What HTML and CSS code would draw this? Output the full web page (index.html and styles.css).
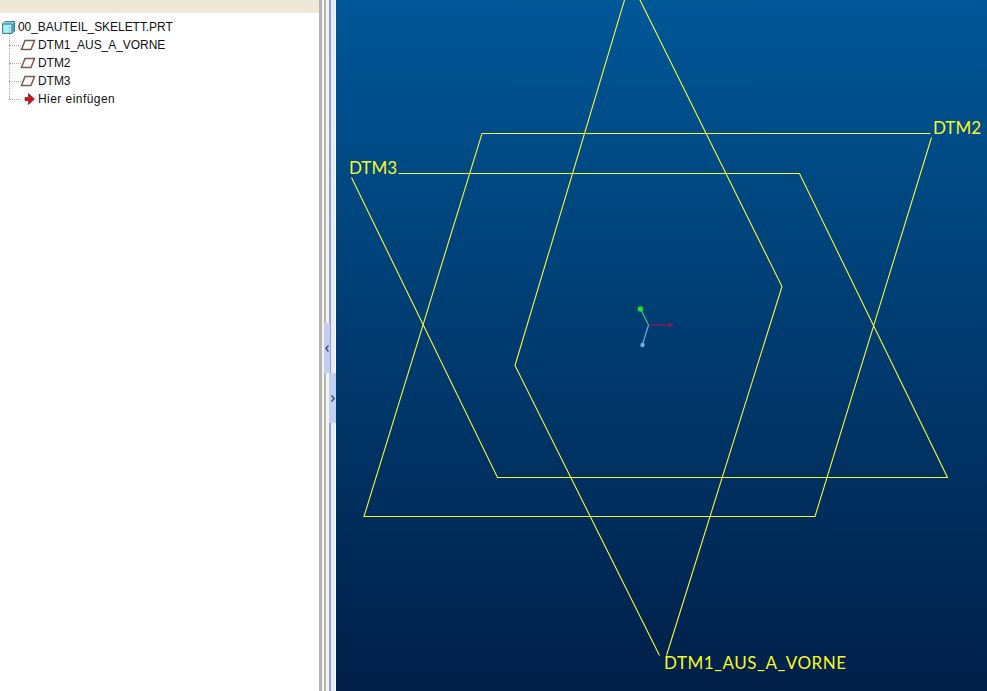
FILE: index.html
```html
<!DOCTYPE html>
<html lang="de">
<head>
<meta charset="utf-8">
<title>00_BAUTEIL_SKELETT.PRT</title>
<link rel="stylesheet" href="styles.css">
</head>
<body>
<div class="app">
  <aside class="panel">
    <div class="panel-top"></div>
    <ul class="tree">
      <li class="row root">
        <svg class="ico" width="13" height="13" viewBox="0 0 13 13"><path d="M.5 3 L3 .5 H12.5 V10 L10 12.5 H.5 Z" fill="#7fdfe8" stroke="#45808f"/><path d="M.5 3 H10 V12.5" fill="none" stroke="#45808f"/><path d="M10.5 3 L12 1.5 V10 L10.5 11.5 Z" fill="#3d9bb0"/><path d="M1.5 4 H9 V11.5 H1.5 Z" fill="#a9f0f6"/></svg>
        <span>00_BAUTEIL_SKELETT.PRT</span>
      </li>
      <li class="row child">
        <i class="dots"></i>
        <svg class="plane" width="16" height="12" viewBox="0 0 16 12"><path d="M5 1.5 H14.5 L11 10.5 H1.5 Z" fill="#fff" stroke="#7a5a48" stroke-width="1.5"/></svg>
        <span>DTM1_AUS_A_VORNE</span>
      </li>
      <li class="row child">
        <i class="dots"></i>
        <svg class="plane" width="16" height="12" viewBox="0 0 16 12"><path d="M5 1.5 H14.5 L11 10.5 H1.5 Z" fill="#fff" stroke="#7a5a48" stroke-width="1.5"/></svg>
        <span>DTM2</span>
      </li>
      <li class="row child">
        <i class="dots"></i>
        <svg class="plane" width="16" height="12" viewBox="0 0 16 12"><path d="M5 1.5 H14.5 L11 10.5 H1.5 Z" fill="#fff" stroke="#7a5a48" stroke-width="1.5"/></svg>
        <span>DTM3</span>
      </li>
      <li class="row child last">
        <i class="dots"></i>
        <svg class="plane" width="16" height="12" viewBox="0 0 16 12"><path d="M5 4.5 H8.5 V.5 L14.5 6 L8.5 11.5 V7.5 H5 Z" fill="#d4101c" stroke="#5a0a10" stroke-width=".6"/></svg>
        <span class="wide">Hier einfügen</span>
      </li>
    </ul>
  </aside>
  <div class="splitter">
    <button class="grip grip-left" type="button" aria-label="Einklappen"><svg width="4" height="7" viewBox="0 0 4 7"><path d="M3.5 .5 L.8 3.5 L3.5 6.5" fill="none" stroke="#2f3f6f" stroke-width="1.3"/></svg></button>
    <button class="grip grip-right" type="button" aria-label="Ausklappen"><svg width="4" height="7" viewBox="0 0 4 7"><path d="M.5 .5 L3.2 3.5 L.5 6.5" fill="none" stroke="#2f3f6f" stroke-width="1.3"/></svg></button>
  </div>
  <main class="view">
    <svg class="scene" width="651" height="691" viewBox="336 0 651 691">
      <g fill="none" stroke="#f4f63c" stroke-width="1.1">
        <path d="M398.5 173.5 H799.5 L947.5 477.5 H497.5 L351.5 177.5"/>
        <path d="M930.5 133.5 H482 L364 516.5 H815 L931.5 137.5"/>
        <path d="M627.5 -10 L515 365.5 L659.5 655.5"/>
        <path d="M635 -10 L782 286.5 L666.5 655.5"/>
      </g>
      <g fill="none">
        <path d="M648.5 325 H672" stroke="#7a1f5e" stroke-width="1.6"/>
        <path d="M648.5 325 L641 309.5" stroke="#4ac070" stroke-width="1.2"/>
        <path d="M648.5 325 L642.5 344.5" stroke="#6aa8e0" stroke-width="1.2"/>
      </g>
      <circle cx="640.5" cy="309" r="2.8" fill="#22e02a"/>
      <circle cx="642.5" cy="345" r="2.2" fill="#63b4f0"/>
      <path d="M668 322.5 L674.5 325 L668 327.5 Z" fill="#7a1f5e"/>
      <text class="lbl" x="933" y="134">DTM2</text>
      <text class="lbl" x="349" y="174">DTM3</text>
      <text class="lbl lbl-long" x="664" y="669">DTM1_AUS_A_VORNE</text>
    </svg>
  </main>
</div>
</body>
</html>
```
FILE: styles.css
```css
* { box-sizing: border-box; }
html, body { margin: 0; height: 100%; overflow: hidden; background: #fff; }
.app { display: flex; width: 987px; height: 691px; }
.panel { width: 319px; flex: none; background: #fff; color: #111; }
.panel-top { height: 14px; background: linear-gradient(180deg, #ece9d8 0 12px, #f5f4ec 13px, #fff 14px); }
.tree { list-style: none; margin: 4px 0 0; padding: 0 0 0 2px; }
.row { display: flex; align-items: center; height: 18px; font-family: "Liberation Sans", sans-serif; font-size: 12px; letter-spacing: -.05px; white-space: nowrap; }
.wide { letter-spacing: .45px; }
.root .ico { margin-right: 3px; }
.child { position: relative; padding-left: 7px; }
.child::before { content: ""; position: absolute; left: 7px; top: -9px; height: 18px; border-left: 1px dotted #aaa; }
.dots { display: block; width: 12px; height: 0; border-top: 1px dotted #aaa; flex: none; }
.plane { flex: none; margin-left: -1px; margin-right: 2px; }
.splitter { position: relative; width: 17px; flex: none; background: linear-gradient(90deg, #b4b4ac 0 3px, #f4f4f0 3px 5px, #b8b8b4 5px 7px, #f4f4f0 7px 10px, #97a1cf 10px 12px, #e8ebf4 12px 16px, #f7f7f5 16px); }
.grip { position: absolute; width: 6px; height: 50px; padding: 0; border: 0; display: flex; align-items: center; justify-content: center; background: #c4cff0; }
.grip-left { left: 5px; top: 323px; }
.grip-right { left: 10px; top: 373px; width: 7px; }
.view { flex: 1; height: 691px; background: linear-gradient(180deg, #005797 0%, #001f48 100%); overflow: hidden; }
.scene { display: block; }
.lbl { fill: #f8f828; font: 17px Lato, "Liberation Sans", sans-serif; }
.lbl-long { letter-spacing: .53px; }
```
